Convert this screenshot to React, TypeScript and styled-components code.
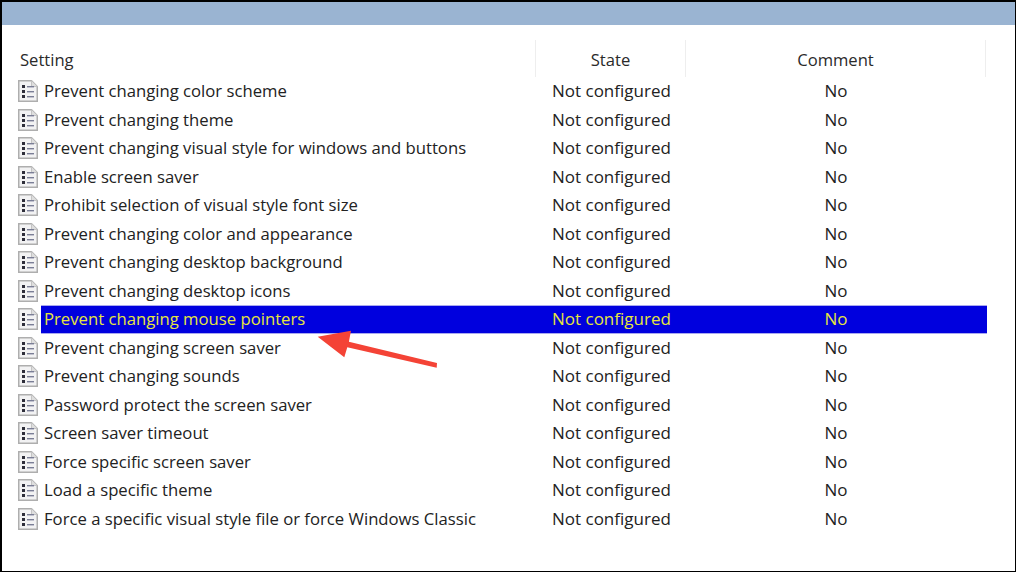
import React from 'react';
import styled, { createGlobalStyle } from 'styled-components';

const SETTINGS = [
  'Prevent changing color scheme',
  'Prevent changing theme',
  'Prevent changing visual style for windows and buttons',
  'Enable screen saver',
  'Prohibit selection of visual style font size',
  'Prevent changing color and appearance',
  'Prevent changing desktop background',
  'Prevent changing desktop icons',
  'Prevent changing mouse pointers',
  'Prevent changing screen saver',
  'Prevent changing sounds',
  'Password protect the screen saver',
  'Screen saver timeout',
  'Force specific screen saver',
  'Load a specific theme',
  'Force a specific visual style file or force Windows Classic',
];

const SELECTED = 'Prevent changing mouse pointers';

const GlobalStyle = createGlobalStyle`
  html, body {
    margin: 0;
    padding: 0;
    background: #000;
  }
  body {
    font-family: "Open Sans", "Noto Sans", "Liberation Sans", sans-serif;
  }
`;

const Frame = styled.div`
  position: relative;
  box-sizing: border-box;
  width: 1016px;
  height: 572px;
  padding: 2px 1px 1px 2px;
  overflow: hidden;
`;

const Window = styled.div`
  height: 100%;
  background: #fff;
`;

const TitleBand = styled.div`
  height: 23px;
  background: #9ab4d2;
`;

const Table = styled.div`
  padding: 15px 29px 0 16px;
`;

const HeaderRow = styled.div`
  display: grid;
  grid-template-columns: 518px 150px 300px;
  height: 37px;
`;

const HeaderCell = styled.div<{ $align?: string }>`
  display: flex;
  align-items: center;
  justify-content: ${(p) => p.$align || 'center'};
  padding-top: 2px;
  padding-left: ${(p) => (p.$align ? '2px' : '0')};
  border-right: 1px solid #eeeeee;
  font-size: 16.6px;
  color: #2a2a2a;
`;

const Row = styled.div`
  display: grid;
  grid-template-columns: 23px 495px 150px 301px;
  height: 28.5px;
  align-items: center;
`;

const IconCell = styled.div`
  display: flex;
  align-items: center;
`;

const Cell = styled.div<{ $selected: boolean }>`
  box-sizing: border-box;
  display: flex;
  align-items: center;
  height: 100%;
  padding-bottom: 1px;
  font-size: 17px;
  white-space: nowrap;
  color: ${(p) => (p.$selected ? '#e6e63c' : '#222222')};
  background: ${(p) => (p.$selected ? '#0000de' : 'transparent')};
  box-shadow: ${(p) => (p.$selected ? 'inset 0 1px 0 #a9a9ef, inset 0 -1px 0 #a9a9ef' : 'none')};
`;

const NameCell = styled(Cell)`
  padding-left: 3px;
  font-size: 16.7px;
`;

const StateCell = styled(Cell)`
  padding-left: 16px;
`;

const CommentCell = styled(Cell)`
  justify-content: center;
  padding-right: 1px;
`;

const Arrow = styled.svg`
  position: absolute;
  left: 0;
  top: 0;
  pointer-events: none;
`;

const DocSvg = styled.svg`
  display: block;
  filter: blur(0.45px);
`;

const DocIcon = () => (
  <DocSvg width="20" height="22" viewBox="0 0 20 22">
    <path d="M.75.75H13.5L19.25 6.5V21.25H.75Z" fill="#f2f2f3" stroke="#aeaeae" strokeWidth="1.5" />
    <path d="M13.5.75V6.5H19.25" fill="#dedede" stroke="#c4c4c4" />
    <rect x="4" y="5" width="3" height="3" fill="#2e2e3a" />
    <rect x="4" y="10" width="3" height="3" fill="#2e2e3a" />
    <rect x="4" y="15" width="3" height="3" fill="#2e2e3a" />
    <rect x="9" y="6" width="7" height="1.4" fill="#7a7e96" />
    <rect x="9" y="11" width="7" height="1.4" fill="#7a7e96" />
    <rect x="9" y="16" width="7" height="1.4" fill="#7a7e96" />
  </DocSvg>
);

const App: React.FC = () => {
  return (
    <Frame>
      <GlobalStyle />
      <Window>
        <TitleBand />
        <Table>
          <HeaderRow>
            <HeaderCell $align="flex-start">Setting</HeaderCell>
            <HeaderCell>State</HeaderCell>
            <HeaderCell>Comment</HeaderCell>
          </HeaderRow>
          {SETTINGS.map((name) => {
            const selected = name === SELECTED;
            return (
              <Row key={name}>
                <IconCell>
                  <DocIcon />
                </IconCell>
                <NameCell $selected={selected}>{name}</NameCell>
                <StateCell $selected={selected}>Not configured</StateCell>
                <CommentCell $selected={selected}>No</CommentCell>
              </Row>
            );
          })}
        </Table>
      </Window>
      <Arrow width="1016" height="572" viewBox="0 0 1016 572">
        <path d="M317.7 336.7L351 330.7 348.9 341.7 437 363 436.7 367.7 347.3 347.3 344.3 357.3Z" fill="#f44336" />
      </Arrow>
    </Frame>
  );
};

export default App;
